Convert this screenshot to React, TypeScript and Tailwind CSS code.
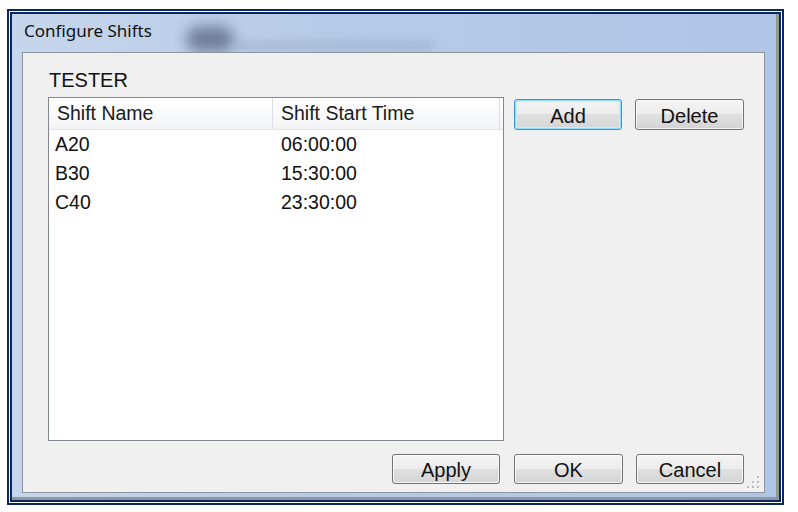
import type { ReactNode } from 'react'

const shifts = [
  { name: 'A20', start: '06:00:00' },
  { name: 'B30', start: '15:30:00' },
  { name: 'C40', start: '23:30:00' },
]

function WinButton({ children, w = 'w-[108px]', h = 'h-[30px]', focused = false }: { children: ReactNode; w?: string; h?: string; focused?: boolean }) {
  return (
    <button
      className={
        `${w} ${h} rounded-[3px] border text-[20px] leading-none text-[#111] pt-[2px] ` +
        'bg-[linear-gradient(to_bottom,#f4f4f4_0%,#ececec_50%,#e0e0e0_50%,#d4d4d4_100%)] ' +
        (focused
          ? 'border-[#3d95d4] shadow-[inset_0_0_0_1px_#8fdcf8,inset_0_0_0_2px_#c9eefc]'
          : 'border-[#727272] shadow-[inset_0_0_0_1px_rgba(255,255,255,0.75)]')
      }
    >
      {children}
    </button>
  )
}

function ResizeGrip() {
  const dots = [
    [10, 0],
    [5, 5], [10, 5],
    [0, 10], [5, 10], [10, 10],
  ]
  return (
    <svg width="14" height="14" viewBox="0 0 14 14" className="absolute right-[3px] bottom-[2px]">
      {dots.map(([x, y], i) => (
        <g key={i}>
          <rect x={x + 1} y={y + 1} width="2" height="2" fill="#ffffff" />
          <rect x={x} y={y} width="2" height="2" fill="#b8bcc2" />
        </g>
      ))}
    </svg>
  )
}

export default function App() {
  return (
    <div className="w-[798px] h-[512px] bg-white pt-[9px] pl-[7px] font-['Liberation_Sans',Arial,sans-serif]">
      {/* double navy frame */}
      <div className="w-[777px] h-[496px] border-2 border-[#0c2565] bg-white p-px flex">
        <div className="flex-1 border-2 border-[#0c2565] flex">
          {/* glass window frame */}
          <div className="flex-1 flex flex-col bg-[linear-gradient(to_right,#c6d6ec,#b6cbe7_40%,#aec5e6)] pl-[10px] pr-[11px] border-r-[3px] border-b-[3px] border-[#8e969f]">
            {/* title bar */}
            <div className="relative h-[38px] flex items-center pl-[2px]">
              <div className="absolute left-[164px] top-[12px] w-[48px] h-[26px] rounded-full bg-[#56657f] opacity-75 blur-[7px]" />
              <div className="absolute left-[212px] top-[28px] w-[200px] h-[7px] rounded-full bg-[#8d9db8] opacity-50 blur-[4px]" />
              <span className="relative text-[17px] text-[#111] font-['Noto_Sans',sans-serif] -mt-[4px]">Configure Shifts</span>
            </div>

            {/* client area */}
            <div className="relative w-[743px] h-[441px] border border-[#8f959c] bg-[#f0f0f0] flex flex-col pt-[15px] pl-[25px] pr-[20px]">
              <div className="h-[24px] leading-[24px] text-[20px] text-[#111] ml-px">TESTER</div>

              <div className="mt-[5px] flex items-start">
                {/* list view */}
                <div className="w-[456px] h-[344px] border border-[#828790] bg-white flex flex-col">
                  <div className="flex h-[32px] border-b border-[#e3e5e8] bg-[linear-gradient(to_bottom,#ffffff,#f3f4f6)]">
                    <div className="w-[224px] flex items-center pl-[8px] border-r border-[#dcdfe3] text-[19.5px] text-[#1a1a1a]">Shift Name</div>
                    <div className="w-[227px] flex items-center pl-[8px] border-r border-[#dcdfe3] text-[19.5px] text-[#1a1a1a]">Shift Start Time</div>
                  </div>
                  {shifts.map((s) => (
                    <div key={s.name} className="flex h-[29px] items-center text-[19.5px] text-[#111]">
                      <div className="w-[224px] pl-[6px]">{s.name}</div>
                      <div className="pl-[8px]">{s.start}</div>
                    </div>
                  ))}
                </div>

                <div className="ml-[10px] mt-[2px] flex gap-[13px]">
                  <WinButton h="h-[31px]" focused>Add</WinButton>
                  <WinButton h="h-[31px]" w="w-[109px]">Delete</WinButton>
                </div>
              </div>

              <div className="mt-[13px] flex justify-end gap-[13px]">
                <div className="mr-px">
                  <WinButton>Apply</WinButton>
                </div>
                <WinButton w="w-[109px]">OK</WinButton>
                <WinButton>Cancel</WinButton>
              </div>

              <ResizeGrip />
            </div>
          </div>
        </div>
      </div>
    </div>
  )
}
